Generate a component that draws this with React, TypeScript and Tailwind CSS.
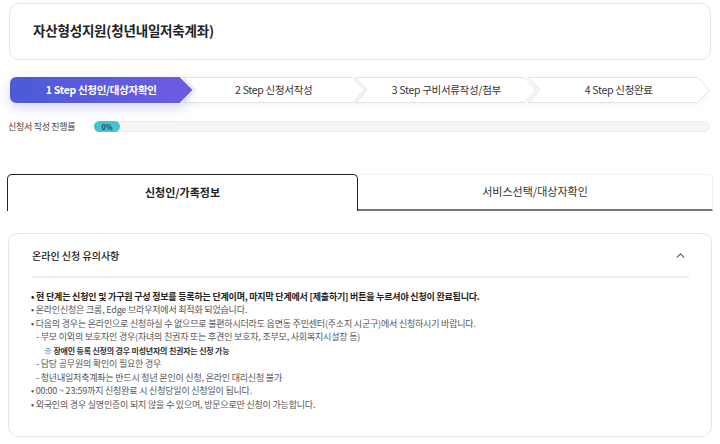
import { ChevronUp } from 'lucide-react'

const font = { fontFamily: '"Noto Sans CJK KR", "Noto Sans", sans-serif' }

const steps = ['1 Step 신청인/대상자확인', '2 Step 신청서작성', '3 Step 구비서류작성/첨부', '4 Step 신청완료']

function StepShape({ first }: { first: boolean }) {
  if (first) {
    return (
      <svg className="absolute inset-0 h-full w-full drop-shadow-[0_5px_6px_rgba(90,90,220,0.25)]" viewBox="0 0 183 26" preserveAspectRatio="none">
        <defs>
          <linearGradient id="stepGrad" x1="0" x2="1" y1="0" y2="0">
            <stop offset="0" stopColor="#4b5bd7" />
            <stop offset="1" stopColor="#6c5ce2" />
          </linearGradient>
        </defs>
        <path d="M7,0 H170 L183,13 L170,26 H7 Q0,26 0,19 V7 Q0,0 7,0 Z" fill="url(#stepGrad)" />
      </svg>
    )
  }
  return (
    <svg className="absolute inset-0 h-full w-full drop-shadow-[0_2px_2px_rgba(0,0,0,0.04)]" viewBox="0 0 183 26" preserveAspectRatio="none">
      <path d="M0.5,0.5 H170 L182,13 L170,25.5 H0.5 L12,13 Z" fill="#fff" stroke="#e3e3e3" strokeWidth="1" />
    </svg>
  )
}

export default function App() {
  return (
    <div className="h-[444px] w-[720px] overflow-hidden bg-white text-[#333]" style={font}>
      <div className="mx-[9px] mt-[3px] flex h-[57px] items-center rounded-[10px] border border-[#e6e6e6] px-[23px] pb-[2px]">
        <h1 className="text-[13.5px] font-bold tracking-[-0.2px] text-[#222]">자산형성지원(청년내일저축계좌)</h1>
      </div>

      <div className="mx-[10px] mt-[17px] flex h-[26px]">
        {steps.map((s, i) => (
          <div key={s} className={`relative flex w-[182.5px] shrink-0 items-center justify-center ${i > 0 ? '-ml-[10px]' : ''}`} style={{ zIndex: 10 - i }}>
            <StepShape first={i === 0} />
            <span className={`relative text-[10.5px] tracking-[-0.3px] ${i === 0 ? 'font-semibold text-white' : 'text-[#333]'}`}>{s}</span>
          </div>
        ))}
      </div>

      <div className="mt-[17px] flex items-center pl-[8px] pr-[10px]">
        <span className="w-[86px] text-[9px] tracking-[-0.3px] text-[#444]">신청서 작성 진행률</span>
        <div className="relative h-[11px] flex-1 rounded-full border border-[#ececec] bg-[#f5f5f5]">
          <span className="absolute -left-px -top-px flex h-[11px] w-[26px] items-center justify-center rounded-full bg-[#45c3cf] text-[7px] font-bold text-[#1d3f55]">0%</span>
        </div>
      </div>

      <div className="mx-[7px] mt-[40px] flex h-[37px]">
        <div className="flex w-[351px] items-center justify-center rounded-t-[5px] border border-b-0 border-[#222] text-[11px] font-semibold text-[#222]">
          신청인/가족정보
        </div>
        <div className="flex flex-1 items-center justify-center rounded-tr-[5px] border-t border-r border-b-2 border-t-[#f0f0f0] border-r-[#f0f0f0] border-b-[#777] text-[11px] text-[#333]">
          서비스선택/대상자확인
        </div>
      </div>

      <div className="mx-[8px] mt-[22px] h-[204px] rounded-[10px] border border-[#e8e8e8] pl-[23px] pr-[22px]">
        <div className="flex h-[44px] items-center justify-between border-b-2 border-[#ececec] pt-[2px]">
          <span className="text-[10px] font-medium text-[#222]">온라인 신청 유의사항</span>
          <ChevronUp className="mr-[2px] h-[13px] w-[13px] text-[#555]" strokeWidth={2} />
        </div>
        <ul className="-ml-[1px] mt-[12px] text-[9px] leading-[13.5px] tracking-[-0.2px] text-[#555]">
          <li className="font-bold text-[#222]">• 현 단계는 신청인 및 가구원 구성 정보를 등록하는 단계이며, 마지막 단계에서 [제출하기] 버튼을 누르셔야 신청이 완료됩니다.</li>
          <li>• 온라인신청은 크롬, Edge 브라우저에서 최적화 되었습니다.</li>
          <li>• 다음의 경우는 온라인으로 신청하실 수 없으므로 불편하시더라도 읍면동 주민센터(주소지 시군구)에서 신청하시기 바랍니다.</li>
          <li className="pl-[5px]">- 부모 이외의 보호자인 경우(자녀의 친권자 또는 후견인 보호자, 조부모, 사회복지시설장 등)</li>
          <li className="pl-[13px] text-[8px] font-bold text-[#333]">※ 장애인 등록 신청의 경우 미성년자의 친권자는 신청 가능</li>
          <li className="pl-[5px]">- 담당 공무원의 확인이 필요한 경우</li>
          <li className="pl-[5px]">- 청년내일저축계좌는 반드시 청년 본인이 신청, 온라인 대리신청 불가</li>
          <li>• 00:00 ~ 23:59까지 신청완료 시 신청당일이 신청일이 됩니다.</li>
          <li>• 외국인의 경우 실명인증이 되지 않을 수 있으며, 방문으로만 신청이 가능합니다.</li>
        </ul>
      </div>
    </div>
  )
}
